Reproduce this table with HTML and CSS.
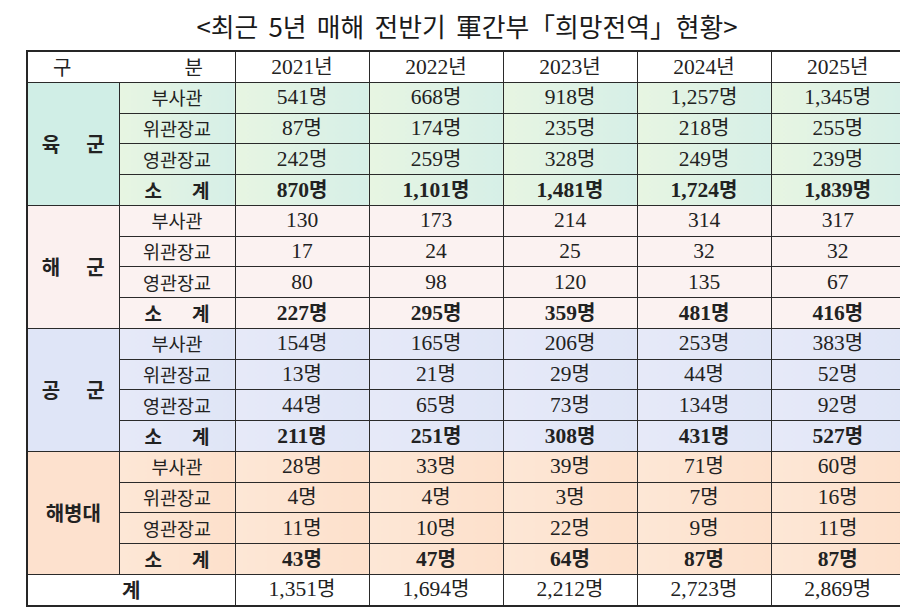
FILE: index.html
```html
<!DOCTYPE html>
<html lang="ko">
<head>
<meta charset="utf-8">
<link rel="stylesheet" href="styles.css">
</head>
<body>
<h1 class="title">&lt;최근 5년 매해 전반기 軍간부「희망전역」현황&gt;</h1>
<table class="stats">
  <colgroup>
    <col class="c-cat"><col class="c-sub"><col class="c-y"><col class="c-y"><col class="c-y"><col class="c-y"><col class="c-y">
  </colgroup>
  <thead>
    <tr class="head">
      <th colspan="2" class="gubun"><span>구</span><span>분</span></th>
      <th><span class="num">2021</span>년</th>
      <th><span class="num">2022</span>년</th>
      <th><span class="num">2023</span>년</th>
      <th><span class="num">2024</span>년</th>
      <th><span class="num">2025</span>년</th>
    </tr>
  </thead>
  <tbody class="army">
    <tr><td rowspan="4" class="cat"><span class="sp">육</span>군</td><td class="sub">부사관</td><td><span class="num">541</span>명</td><td><span class="num">668</span>명</td><td><span class="num">918</span>명</td><td><span class="num">1,257</span>명</td><td><span class="num">1,345</span>명</td></tr>
    <tr><td class="sub">위관장교</td><td><span class="num">87</span>명</td><td><span class="num">174</span>명</td><td><span class="num">235</span>명</td><td><span class="num">218</span>명</td><td><span class="num">255</span>명</td></tr>
    <tr><td class="sub">영관장교</td><td><span class="num">242</span>명</td><td><span class="num">259</span>명</td><td><span class="num">328</span>명</td><td><span class="num">249</span>명</td><td><span class="num">239</span>명</td></tr>
    <tr class="subtotal"><td class="sub"><span class="sp2">소</span>계</td><td><span class="num">870</span>명</td><td><span class="num">1,101</span>명</td><td><span class="num">1,481</span>명</td><td><span class="num">1,724</span>명</td><td><span class="num">1,839</span>명</td></tr>
  </tbody>
  <tbody class="navy">
    <tr><td rowspan="4" class="cat"><span class="sp">해</span>군</td><td class="sub">부사관</td><td><span class="num">130</span></td><td><span class="num">173</span></td><td><span class="num">214</span></td><td><span class="num">314</span></td><td><span class="num">317</span></td></tr>
    <tr><td class="sub">위관장교</td><td><span class="num">17</span></td><td><span class="num">24</span></td><td><span class="num">25</span></td><td><span class="num">32</span></td><td><span class="num">32</span></td></tr>
    <tr><td class="sub">영관장교</td><td><span class="num">80</span></td><td><span class="num">98</span></td><td><span class="num">120</span></td><td><span class="num">135</span></td><td><span class="num">67</span></td></tr>
    <tr class="subtotal"><td class="sub"><span class="sp2">소</span>계</td><td><span class="num">227</span>명</td><td><span class="num">295</span>명</td><td><span class="num">359</span>명</td><td><span class="num">481</span>명</td><td><span class="num">416</span>명</td></tr>
  </tbody>
  <tbody class="air">
    <tr><td rowspan="4" class="cat"><span class="sp">공</span>군</td><td class="sub">부사관</td><td><span class="num">154</span>명</td><td><span class="num">165</span>명</td><td><span class="num">206</span>명</td><td><span class="num">253</span>명</td><td><span class="num">383</span>명</td></tr>
    <tr><td class="sub">위관장교</td><td><span class="num">13</span>명</td><td><span class="num">21</span>명</td><td><span class="num">29</span>명</td><td><span class="num">44</span>명</td><td><span class="num">52</span>명</td></tr>
    <tr><td class="sub">영관장교</td><td><span class="num">44</span>명</td><td><span class="num">65</span>명</td><td><span class="num">73</span>명</td><td><span class="num">134</span>명</td><td><span class="num">92</span>명</td></tr>
    <tr class="subtotal"><td class="sub"><span class="sp2">소</span>계</td><td><span class="num">211</span>명</td><td><span class="num">251</span>명</td><td><span class="num">308</span>명</td><td><span class="num">431</span>명</td><td><span class="num">527</span>명</td></tr>
  </tbody>
  <tbody class="marine">
    <tr><td rowspan="4" class="cat">해병대</td><td class="sub">부사관</td><td><span class="num">28</span>명</td><td><span class="num">33</span>명</td><td><span class="num">39</span>명</td><td><span class="num">71</span>명</td><td><span class="num">60</span>명</td></tr>
    <tr><td class="sub">위관장교</td><td><span class="num">4</span>명</td><td><span class="num">4</span>명</td><td><span class="num">3</span>명</td><td><span class="num">7</span>명</td><td><span class="num">16</span>명</td></tr>
    <tr><td class="sub">영관장교</td><td><span class="num">11</span>명</td><td><span class="num">10</span>명</td><td><span class="num">22</span>명</td><td><span class="num">9</span>명</td><td><span class="num">11</span>명</td></tr>
    <tr class="subtotal"><td class="sub"><span class="sp2">소</span>계</td><td><span class="num">43</span>명</td><td><span class="num">47</span>명</td><td><span class="num">64</span>명</td><td><span class="num">87</span>명</td><td><span class="num">87</span>명</td></tr>
  </tbody>
  <tfoot>
    <tr class="total"><td colspan="2" class="total-label">계</td><td><span class="num">1,351</span>명</td><td><span class="num">1,694</span>명</td><td><span class="num">2,212</span>명</td><td><span class="num">2,723</span>명</td><td><span class="num">2,869</span>명</td></tr>
  </tfoot>
</table>
</body>
</html>
```

FILE: styles.css
```css
html, body {
  margin: 0;
  padding: 0;
  background: #ffffff;
  width: 900px;
  height: 608px;
  overflow: hidden;
}

body {
  font-family: "Noto Sans CJK KR", "Noto Sans", sans-serif;
  color: #1e1e1e;
}

.title {
  margin: 0;
  height: 50px;
  display: flex;
  align-items: center;
  justify-content: center;
  font-size: 25.8px;
  font-weight: 400;
  word-spacing: 3px;
  padding-left: 34px;
  padding-top: 1px;
  box-sizing: border-box;
  color: #1a1a1a;
}

.stats {
  margin-left: 26px;
  border-collapse: collapse;
  table-layout: fixed;
  width: 880px;
  border: 2px solid #262626;
}

.c-cat { width: 92px; }
.c-sub { width: 116px; }
.c-y { width: 134px; }

.stats th,
.stats td {
  border: 1.5px solid #2a2a2a;
  height: 29.75px;
  padding: 0;
  text-align: center;
  vertical-align: middle;
  font-size: 20px;
  line-height: 1;
  font-weight: 400;
  color: #222;
}

.num {
  font-family: "Liberation Serif", serif;
  font-size: 21.5px;
}

.stats .head th { background: #ffffff; font-size: 20px; }

.stats .head .gubun { text-align: left; padding-left: 25px; }
.head .gubun span:first-child { display: inline-block; margin-right: 113px; }

.stats .cat {
  font-weight: 700;
  font-size: 20px;
}
.cat .sp { display: inline-block; margin-right: 26px; }

.stats .sub { font-size: 18.5px; }
.stats .subtotal td { font-weight: 700; }
.subtotal .num { font-weight: 700; }
.stats .subtotal .sub { text-align: left; padding-left: 25px; font-size: 19px; }
.sp2 { display: inline-block; margin-right: 30px; }

.army td { background: linear-gradient(90deg, #e7f5e2 0%, #d6efe7 100%); }
.army .cat { background: #d0eee6; }

.navy td { background: #fbf2f1; }
.navy .cat { background: #fbf0ef; }

.air td { background: linear-gradient(90deg, #e6e9f8 0%, #dfe5f6 100%); }
.air .cat { background: #dfe5f7; }

.marine td { background: linear-gradient(90deg, #fde7d6 0%, #fde0cb 100%); }
.marine .cat { background: #fde1ce; }

.total td { background: #ffffff; }
.stats .total-label { font-weight: 700; font-size: 20px; }
```
